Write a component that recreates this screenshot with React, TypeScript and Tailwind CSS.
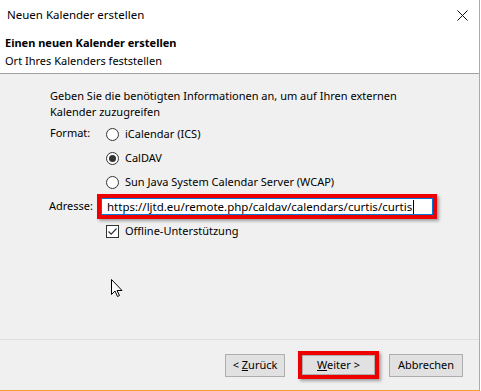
import React from "react";

const Radio = ({ checked }: { checked?: boolean }) => (
  <span className="flex h-[13px] w-[13px] items-center justify-center rounded-full border border-[#333] bg-white">
    {checked && <span className="h-[7px] w-[7px] rounded-full bg-[#333]" />}
  </span>
);

const Checkbox = () => (
  <span className="flex h-[13px] w-[13px] items-center justify-center border border-[#333] bg-white">
    <svg width="11" height="11" viewBox="0 0 11 11" fill="none">
      <path d="M1.5 5.5 L4.2 8.2 L9.5 2.5" stroke="#333" strokeWidth="1.2" />
    </svg>
  </span>
);

export default function App() {
  return (
    <div className="relative h-[391px] w-[481px] bg-white font-['Segoe_UI','Noto_Sans',sans-serif] text-[11px] text-black">
      <div className="flex h-[391px] w-[480px] flex-col border-b border-r border-[#f0a030]">
        {/* Title bar */}
        <div className="flex h-[30px] items-center justify-between pl-[7px] pr-[11px] text-[11.5px]">
          <span>Neuen Kalender erstellen</span>
          <svg width="11" height="11" viewBox="0 0 11 11">
            <path d="M0.5 0.5 L10.5 10.5 M10.5 0.5 L0.5 10.5" stroke="#111" strokeWidth="1" />
          </svg>
        </div>

        {/* Header */}
        <div className="border-b border-[#a0a0a0] pb-[3px] pl-[5px] pt-[4px] leading-[18px]">
          <div className="font-bold">Einen neuen Kalender erstellen</div>
          <div>Ort Ihres Kalenders feststellen</div>
        </div>

        {/* Content */}
        <div className="flex flex-1 flex-col bg-[#f0f0f0] pl-[50px] pt-[14px]">
          <p className="leading-[16px]">
            Geben Sie die benötigten Informationen an, um auf Ihren externen
            <br />
            Kalender zuzugreifen
          </p>

          <div className="mt-[2px] flex">
            <div className="w-[56px] pt-[3px]">Format:</div>
            <div className="flex flex-col">
              <label className="flex h-[24px] items-center gap-[6px]">
                <Radio />
                <span>iCalendar (ICS)</span>
              </label>
              <label className="flex h-[24px] items-center gap-[6px]">
                <Radio checked />
                <span>CalDAV</span>
              </label>
              <label className="flex h-[24px] items-center gap-[6px]">
                <Radio />
                <span>Sun Java System Calendar Server (WCAP)</span>
              </label>
            </div>
          </div>

          <div className="-ml-[1px] flex h-[25px] items-center">
            <div className="w-[48px]">Adresse:</div>
            <div className="flex h-[25px] w-[340px] border-4 border-[#ee0000] shadow-[2px_2px_3px_rgba(0,0,0,0.35)]">
              <div className="flex flex-1 items-center border border-[#0078d7] bg-white pl-[5px] text-[11.5px]">
                <span>https://ljtd.eu/remote.php/caldav/calendars/curtis/curtis</span>
                <span className="ml-[1px] h-[14px] w-[1px] bg-black" />
              </div>
            </div>
          </div>

          <label className="flex h-[24px] items-center gap-[6px] pl-[56px]">
            <Checkbox />
            <span>Offline-Unterstützung</span>
          </label>
        </div>

        {/* Footer */}
        <div className="flex h-[51px] items-center justify-end border-t border-[#dfdfdf] bg-[#f0f0f0] pr-[16px]">
          <button className="h-[23px] w-[60px] border border-[#adadad] bg-[#e1e1e1]">
            &lt; <span className="underline">Z</span>urück
          </button>
          <div className="ml-[13px] flex h-[28px] w-[81px] border-4 border-[#ee0000] shadow-[2px_2px_3px_rgba(0,0,0,0.35)]">
            <button className="flex-1 border border-[#adadad] bg-[#e1e1e1]">
              <span className="underline">W</span>eiter &gt;
            </button>
          </div>
          <button className="ml-[10px] h-[23px] w-[74px] border border-[#adadad] bg-[#e1e1e1]">
            Abbrechen
          </button>
        </div>
      </div>

      {/* Mouse pointer */}
      <svg className="absolute left-[111px] top-[279px]" width="12" height="19" viewBox="0 0 12 19">
        <path
          d="M0.5 0.5 L0.5 15.5 L4 12 L6.5 17.5 L8.5 16.5 L6 11.5 L11 11.5 Z"
          fill="white"
          stroke="black"
          strokeWidth="1"
          strokeLinejoin="miter"
        />
      </svg>
    </div>
  );
}
